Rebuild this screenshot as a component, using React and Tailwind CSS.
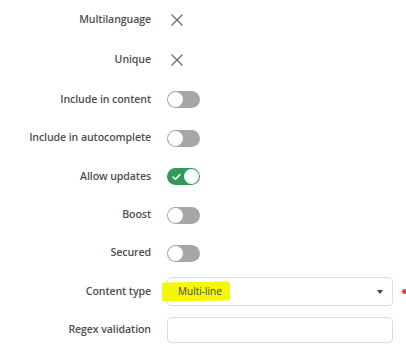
import React from "react";

const rows = [
  { label: "Multilanguage", kind: "x", h: "h-[40px]" },
  { label: "Unique", kind: "x", h: "h-[40px]" },
  { label: "Include in content", kind: "off", h: "h-[39px]" },
  { label: "Include in autocomplete", kind: "off", h: "h-[38px]" },
  { label: "Allow updates", kind: "on", h: "h-[39px]" },
  { label: "Boost", kind: "off", h: "h-[38px]" },
  { label: "Secured", kind: "off", h: "h-[38px]" },
  { label: "Content type", kind: "select", h: "h-[39px]" },
  { label: "Regex validation", kind: "input", h: "h-[38px]" },
];

function XMark() {
  return (
    <svg width="12" height="12" viewBox="0 0 12 12" className="ml-[4px]">
      <path d="M1 1 L11 11 M11 1 L1 11" stroke="#6b6b6b" strokeWidth="1.3" strokeLinecap="round" />
    </svg>
  );
}

function Toggle({ on }) {
  if (on) {
    return (
      <div className="relative w-[33px] h-[17px] rounded-full bg-[#2f9a5c]">
        <svg width="9" height="8" viewBox="0 0 9 8" className="absolute left-[5px] top-[5px]">
          <path d="M1 4 L3.5 6.2 L8 1.5" stroke="#fff" strokeWidth="1.6" fill="none" strokeLinecap="round" strokeLinejoin="round" />
        </svg>
        <div className="absolute right-[1px] top-[1px] w-[15px] h-[15px] rounded-full bg-white" />
      </div>
    );
  }
  return (
    <div className="relative w-[33px] h-[17px] rounded-full bg-[#a6a6a6]">
      <div className="absolute left-[1px] top-[1px] w-[15px] h-[15px] rounded-full bg-white" />
    </div>
  );
}

function Control({ kind }) {
  if (kind === "x") return <XMark />;
  if (kind === "on") return <Toggle on />;
  if (kind === "off") return <Toggle />;
  if (kind === "select") {
    return (
      <div className="relative flex items-center">
        <div className="flex items-center w-[226px] h-[29px] border border-[#dcdcdc] rounded-[4px] bg-white pl-[10px] pr-[9px]">
          <span className="relative z-10 text-[10px] text-[#444]">Multi-line</span>
          <span className="ml-auto w-0 h-0 border-l-[3px] border-r-[3px] border-t-[4px] border-l-transparent border-r-transparent border-t-[#444]" />
        </div>
        <span className="absolute left-[-5px] top-[5px] w-[68px] h-[19px] bg-[#f4f70a] rounded-[3px] -rotate-1" />
        <span className="absolute left-[235px] top-[12px] w-[5px] h-[5px] rounded-full bg-[#e0464c]" />
      </div>
    );
  }
  return <div className="w-[226px] h-[26px] border border-[#dcdcdc] rounded-[4px] bg-white" />;
}

export default function App() {
  return (
    <div className="w-[406px] h-[358px] bg-white overflow-hidden font-['Open_Sans',sans-serif]">
      {rows.map((r) => (
        <div key={r.label} className={`flex items-center ${r.h}`}>
          <div className="w-[151px] text-right text-[10.6px] font-semibold text-[#4f4f4f] tracking-[-0.1px]">
            {r.label}
          </div>
          <div className="ml-[16px]">
            <Control kind={r.kind} />
          </div>
        </div>
      ))}
    </div>
  );
}
